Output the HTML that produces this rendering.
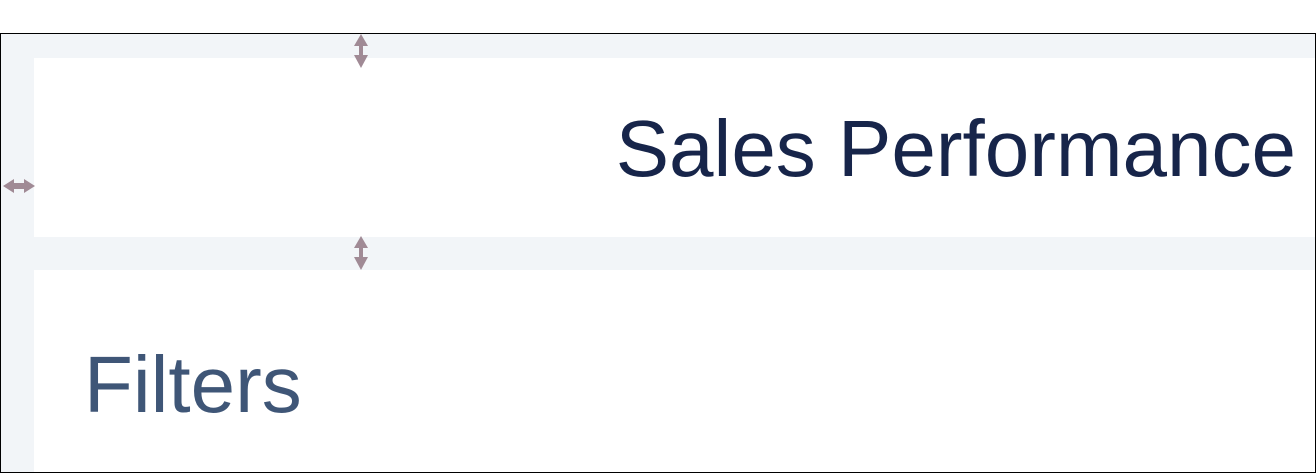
<!DOCTYPE html>
<html><head><style>
html,body{margin:0;padding:0;background:#fff;width:1316px;height:473px;overflow:hidden;font-family:"Liberation Sans",sans-serif}
.frame{position:absolute;left:0;top:33px;width:1314px;height:438px;border:1px solid #000;background:#f2f5f8;overflow:hidden}
.p{position:absolute;background:#fff}
.t1{position:absolute;right:20px;top:109px;font-size:80px;line-height:1;color:#17254a;white-space:nowrap}
.t2{position:absolute;left:84px;top:345px;font-size:80px;line-height:1;color:#3f5677;white-space:nowrap}
svg{position:absolute}
</style></head><body>
<div class="frame">
<div class="p" style="left:33px;top:24px;width:1290px;height:179px"></div>
<div class="p" style="left:33px;top:236px;width:1290px;height:210px"></div>
</div>
<div class="t1">Sales Performance</div>
<div class="t2">Filters</div>
<svg style="left:353px;top:33px" width="16" height="36" viewBox="0 0 16 36"><path d="M8 1 L15 13 L10 13 L10 22 L15 22 L8 35 L1 22 L6 22 L6 13 L1 13 Z" fill="#a08a95"/></svg>
<svg style="left:353px;top:235px" width="16" height="36" viewBox="0 0 16 36"><path d="M8 1 L15 13 L10 13 L10 22 L15 22 L8 35 L1 22 L6 22 L6 13 L1 13 Z" fill="#a08a95"/></svg>
<svg style="left:2px;top:178px" width="34" height="16" viewBox="0 0 34 16"><path d="M1 8 L12 1 L12 5 L22 5 L22 1 L33 8 L22 15 L22 11 L12 11 L12 15 Z" fill="#a08a95"/></svg>
</body></html>
